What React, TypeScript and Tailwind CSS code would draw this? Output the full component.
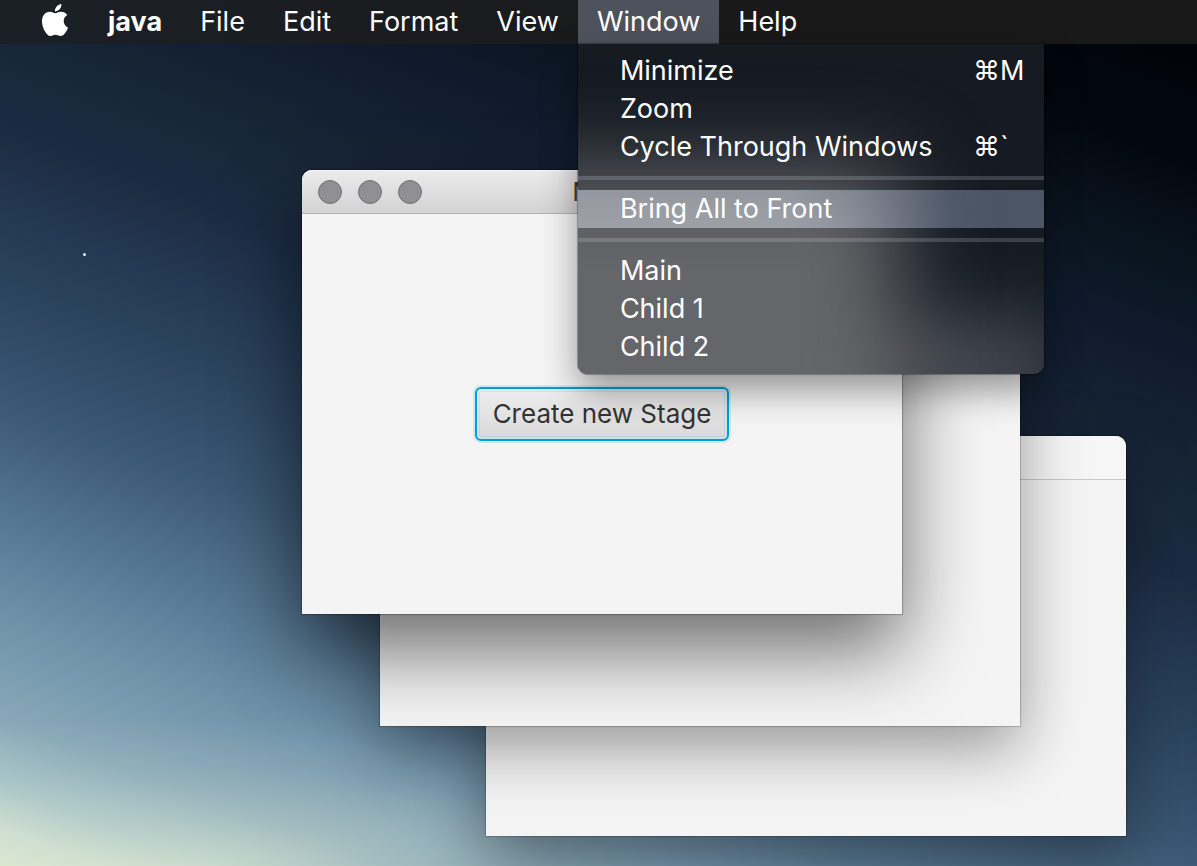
import { SiApple } from "react-icons/si";
import clsx from "clsx";
import type { ReactNode } from "react";

type WindowProps = {
  name: string;
  title?: string;
  className: string;
  active?: boolean;
  children?: ReactNode;
};

type Item = { label: string; shortcut?: string; highlighted?: boolean };

const groups: Item[][] = [
  [
    { label: "Minimize", shortcut: "⌘M" },
    { label: "Zoom" },
    { label: "Cycle Through Windows", shortcut: "⌘`" },
  ],
  [{ label: "Bring All to Front", highlighted: true }],
  [{ label: "Main" }, { label: "Child 1" }, { label: "Child 2" }],
];

function AppWindow({ name, title, className, active, children }: WindowProps) {
  return (
    <section
      aria-label={name}
      className={clsx(
        "absolute flex flex-col rounded-t-[10px] bg-[#f4f4f4]",
        active
          ? "shadow-[0_0_1px_1px_rgba(0,0,0,0.25),0_36px_80px_rgba(0,0,0,0.56)]"
          : "shadow-[0_0_1px_1px_rgba(0,0,0,0.2),0_22px_64px_rgba(0,0,0,0.38)]",
        className,
      )}
    >
      <header
        className={clsx(
          "relative flex h-11 shrink-0 items-center justify-center rounded-t-[10px] border-b",
          active
            ? "border-[#b2b2b2] bg-linear-to-b from-[#ececec] to-[#d3d3d3] shadow-[inset_0_1px_0_#f8f8f8]"
            : "border-[#c8c8c8] bg-[#f6f6f6]",
        )}
      >
        {active && (
          <div className="absolute left-4 flex gap-4">
            {["Close", "Minimize", "Zoom"].map((action) => (
              <button
                key={action}
                type="button"
                aria-label={action}
                className="size-6 rounded-full border border-[#717174] bg-[#908f94]"
              />
            ))}
          </div>
        )}
        {title && <h2 className="text-[26px] leading-8 text-[#404040]">{title}</h2>}
      </header>
      <div className="flex flex-1 items-center justify-center">{children}</div>
    </section>
  );
}

/* Frosted dark glass: soft light patches where windows lie under the menu. */
function MenuGlass() {
  return (
    <div
      aria-hidden="true"
      className="absolute inset-0 -z-10 overflow-hidden rounded-b-[10px] bg-linear-to-b from-[#161b22] to-[#151b24]"
    >
      <div className="absolute top-[280px] -bottom-10 -left-24 w-[580px] bg-[#4c5057] blur-[40px]" />
      <div className="absolute top-[126px] -bottom-40 -left-40 w-[480px] bg-[#656669] blur-[44px]" />
    </div>
  );
}

function WindowMenu() {
  return (
    <div
      role="menu"
      aria-label="Window"
      className="absolute top-full left-0 isolate w-[466px] rounded-b-[10px] py-2 shadow-[0_0_1px_1px_rgba(0,0,0,0.3),0_16px_36px_rgba(0,0,0,0.4)]"
    >
      <MenuGlass />
      {groups.map((items, index) => (
        <div key={index}>
          {index > 0 && <div role="separator" className="my-2.5 h-1 bg-[#d2dae6]/20" />}
          {items.map(({ label, shortcut, highlighted }) => (
            <button
              key={label}
              type="button"
              role="menuitem"
              className={clsx(
                "flex h-[38px] w-full items-center pr-5 pl-[42px] text-left whitespace-nowrap",
                highlighted &&
                  "bg-[linear-gradient(90deg,rgba(225,230,240,0.48)_45%,rgba(170,185,215,0.37)_80%)]",
              )}
            >
              <span className="flex-1">{label}</span>
              {shortcut && <span className="w-[51px]">{shortcut}</span>}
            </button>
          ))}
        </div>
      ))}
    </div>
  );
}

function MenuTitle({ label, bold, open }: { label: string; bold?: boolean; open?: boolean }) {
  return (
    <button
      type="button"
      className={clsx("h-full px-[19px]", bold && "font-bold", open && "bg-[#4d525d]")}
    >
      {label}
    </button>
  );
}

export default function App() {
  return (
    <div className="flex min-h-screen flex-col bg-[radial-gradient(640px_150px_at_200px_100%,rgba(222,232,208,0.6)_0%,rgba(214,226,208,0.34)_30%,rgba(208,222,210,0.12)_65%,rgba(200,215,210,0)_100%),linear-gradient(200.7deg,#000309_0%,#03070f_12%,#09131c_19%,#0e1a2a_26%,#132033_32%,#19283a_39%,#1c2b42_44%,#22364f_49%,#2d4561_57%,#3b5874_65%,#547590_73%,#6f92aa_81%,#89a9b8_89%,#a8c5c8_94%,#cbdccf_97%,#dcebd0_100%)] font-['Inter','Liberation_Sans',sans-serif]">
      <nav
        aria-label="Menu bar"
        className="relative z-10 flex h-11 items-center bg-linear-to-r from-[#1b2027] to-[#191919] to-60% pl-[39px] text-[27px] leading-8 text-white"
      >
        <button type="button" aria-label="Apple menu" className="mr-[18px] mb-1">
          <SiApple className="size-8" />
        </button>
        <MenuTitle label="java" bold />
        <MenuTitle label="File" />
        <MenuTitle label="Edit" />
        <MenuTitle label="Format" />
        <MenuTitle label="View" />
        <div className="relative h-full">
          <MenuTitle label="Window" open />
          <WindowMenu />
        </div>
        <MenuTitle label="Help" />
      </nav>
      <main className="relative flex-1 overflow-hidden">
        <div className="absolute top-[209px] left-[83px] size-[3px] rounded-full bg-[#e8ece8]" />
        <AppWindow name="Child 2" className="top-[392px] left-[486px] h-[400px] w-[640px]" />
        <AppWindow name="Child 1" className="top-[282px] left-[380px] h-[400px] w-[640px]" />
        <AppWindow name="Main window" title="Main" active className="top-[126px] left-[302px] h-[444px] w-[600px]">
          <button
            type="button"
            className="h-[54px] rounded-md border-2 border-[#039ed3] bg-linear-to-b from-[#eeeeee] to-[#d9d9d9] px-4 text-[26px] leading-8 text-[#333333] shadow-[0_0_0_2px_rgba(3,158,211,0.14),inset_0_0_0_2px_rgba(255,255,255,0.3),inset_0_0_0_3px_rgba(3,158,211,0.12)]"
          >
            Create new Stage
          </button>
        </AppWindow>
      </main>
    </div>
  );
}
